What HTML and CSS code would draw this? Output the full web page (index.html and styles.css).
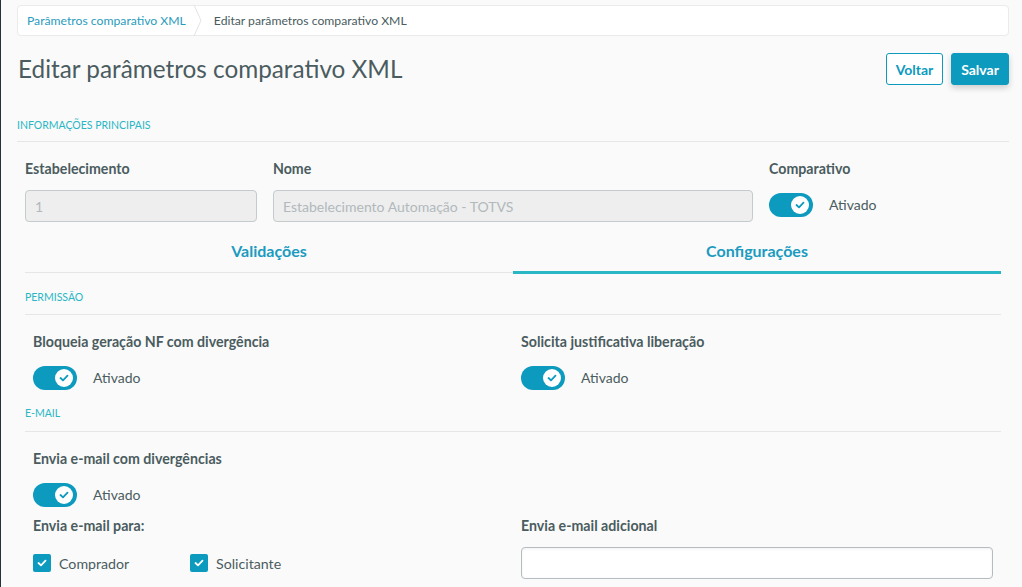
FILE: index.html
```html
<!DOCTYPE html>
<html>
  <head>
    <meta charset="UTF-8" />
    <meta name="viewport" content="width=device-width, initial-scale=1.0" />
    <title>Editar parâmetros comparativo XML</title>
    <link rel="stylesheet" href="styles.css">
  </head>
  <body>
    <div class="page">
      <nav class="breadcrumb">
        <a class="crumb link" href="#">Parâmetros comparativo XML</a>
        <svg class="crumb-sep" width="10" height="31" viewBox="0 0 10 31">
          <polyline points="1,0 8,15.5 1,31" fill="none" stroke="#e3e3e3" stroke-width="1" />
        </svg>
        <span class="crumb">Editar parâmetros comparativo XML</span>
      </nav>

      <header class="page-header">
        <h1 class="page-title">Editar parâmetros comparativo XML</h1>
        <div class="actions">
          <button class="btn btn-outline">Voltar</button>
          <button class="btn btn-primary">Salvar</button>
        </div>
      </header>

      <div class="section-title">Informações principais</div>

      <div class="main-row">
        <div class="field">
          <label class="label">Estabelecimento</label>
          <input class="input" value="1" disabled />
        </div>
        <div class="field">
          <label class="label">Nome</label>
          <input class="input" value="Estabelecimento Automação - TOTVS" disabled />
        </div>
        <div class="field">
          <label class="label">Comparativo</label>
          <div class="switch-row tall">
            <span class="switch"><span class="knob"><svg width="10" height="8" viewBox="0 0 10 8"><polyline points="1.5,4 4,6.3 8.5,1.7" fill="none" stroke="#0c9abe" stroke-width="1.8" stroke-linecap="round" stroke-linejoin="round"/></svg></span></span>
            <span class="switch-text">Ativado</span>
          </div>
        </div>
      </div>

      <div class="tabs-wrap">
        <div class="tabs">
          <div class="tab">Validações</div>
          <div class="tab active">Configurações</div>
        </div>

        <div class="section-title sub">Permissão</div>
        <div class="grid-2">
          <div class="field pad">
            <label class="label">Bloqueia geração NF com divergência</label>
            <div class="switch-row">
              <span class="switch"><span class="knob"><svg width="10" height="8" viewBox="0 0 10 8"><polyline points="1.5,4 4,6.3 8.5,1.7" fill="none" stroke="#0c9abe" stroke-width="1.8" stroke-linecap="round" stroke-linejoin="round"/></svg></span></span>
              <span class="switch-text">Ativado</span>
            </div>
          </div>
          <div class="field pad">
            <label class="label">Solicita justificativa liberação</label>
            <div class="switch-row">
              <span class="switch"><span class="knob"><svg width="10" height="8" viewBox="0 0 10 8"><polyline points="1.5,4 4,6.3 8.5,1.7" fill="none" stroke="#0c9abe" stroke-width="1.8" stroke-linecap="round" stroke-linejoin="round"/></svg></span></span>
              <span class="switch-text">Ativado</span>
            </div>
          </div>
        </div>

        <div class="section-title sub email">E-mail</div>
        <div class="grid-2">
          <div class="field pad">
            <label class="label">Envia e-mail com divergências</label>
            <div class="switch-row">
              <span class="switch"><span class="knob"><svg width="10" height="8" viewBox="0 0 10 8"><polyline points="1.5,4 4,6.3 8.5,1.7" fill="none" stroke="#0c9abe" stroke-width="1.8" stroke-linecap="round" stroke-linejoin="round"/></svg></span></span>
              <span class="switch-text">Ativado</span>
            </div>
          </div>
          <div></div>
          <div class="field pad row-gap">
            <label class="label">Envia e-mail para:</label>
            <div class="checks">
              <span class="check-item">
                <span class="checkbox"><svg width="10" height="8" viewBox="0 0 10 8"><polyline points="1.5,4 4,6.3 8.5,1.7" fill="none" stroke="#fff" stroke-width="1.8" stroke-linecap="round" stroke-linejoin="round"/></svg></span>
                Comprador
              </span>
              <span class="check-item">
                <span class="checkbox"><svg width="10" height="8" viewBox="0 0 10 8"><polyline points="1.5,4 4,6.3 8.5,1.7" fill="none" stroke="#fff" stroke-width="1.8" stroke-linecap="round" stroke-linejoin="round"/></svg></span>
                Solicitante
              </span>
            </div>
          </div>
          <div class="field pad row-gap">
            <label class="label">Envia e-mail adicional</label>
            <input class="input white" />
          </div>
        </div>
      </div>
    </div>
  </body>
</html>
```

FILE: styles.css
```css
body {
  margin: 0;
  background: #fafafa;
  border-left: 1px solid #25323a;
  font-family: Lato, "Open Sans", Arial, sans-serif;
  color: #4a5c60;
  height: 587px;
  overflow: hidden;
  box-sizing: border-box;
}

.page {
  padding: 5px 13px 0 16px;
}

/* breadcrumb */
.breadcrumb {
  display: flex;
  align-items: center;
  height: 29px;
  background: #fff;
  border: 1px solid #ebebeb;
  border-radius: 4px;
  padding: 0 9px;
  font-size: 12.2px;
}
.crumb {
  color: #4a5c60;
}
.crumb.link {
  color: #2a9cbd;
  text-decoration: none;
}
.crumb-sep {
  margin: 0 11px 0 7px;
}

/* header */
.page-header {
  display: flex;
  align-items: center;
  justify-content: space-between;
  margin-top: 17px;
  height: 32px;
}
.page-title {
  margin: -2px 0 0 1px;
  font-size: 24.3px;
  font-weight: 400;
  color: #4a5c60;
}
.actions {
  display: flex;
  gap: 8px;
}
.btn {
  height: 32px;
  padding: 0 8px;
  border-radius: 3px;
  font-family: inherit;
  font-size: 14px;
  font-weight: 700;
}
.btn-outline {
  background: #fff;
  border: 1px solid #0c9abe;
  color: #0c9abe;
  width: 57px;
}
.btn-primary {
  background: #0c9abe;
  border: 1px solid #0c9abe;
  color: #fff;
  width: 58px;
  box-shadow: 0 3px 6px rgba(0, 0, 0, 0.18);
}

/* section titles */
.section-title {
  margin-top: 32px;
  padding-bottom: 8px;
  line-height: 16px;
  font-size: 10.5px;
  text-transform: uppercase;
  color: #29b6c5;
  border-bottom: 1px solid #e6e6e6;
}
.section-title.sub {
  margin-top: 16px;
  padding-bottom: 9px;
}
.section-title.email {
  margin-top: 15px;
  padding-bottom: 10px;
}

/* fields */
.main-row {
  display: grid;
  grid-template-columns: 248px 496px 248px;
  margin-top: 17px;
}
.field {
  padding: 0 8px;
  display: flex;
  flex-direction: column;
}
.label {
  display: block;
  line-height: 20px;
  font-size: 14.2px;
  font-weight: 700;
  margin-bottom: 11px;
}
.input {
  height: 32px;
  box-sizing: border-box;
  border: 1px solid #c4cacd;
  border-radius: 4px;
  background: #eeeeee;
  padding: 0 9px;
  font-family: inherit;
  font-size: 14px;
  color: #b1b9bc;
}
.input.white {
  background: #fff;
  border-color: #b5bcc0;
  box-shadow: inset 0 1px 3px rgba(0, 0, 0, 0.06);
}

/* switch */
.switch-row {
  display: flex;
  align-items: center;
  gap: 16px;
  height: 24px;
}
.switch-row.tall {
  height: 30px;
}
.switch {
  width: 44px;
  height: 24px;
  border-radius: 12px;
  background: #0c9abe;
  display: flex;
  align-items: center;
  justify-content: flex-end;
  padding-right: 4px;
  box-sizing: border-box;
}
.knob {
  width: 18px;
  height: 18px;
  border-radius: 50%;
  background: #fff;
  display: flex;
  align-items: center;
  justify-content: center;
}
.switch-text {
  font-size: 14px;
  color: #4a5c60;
  margin-top: -2px;
}

/* tabs */
.tabs-wrap {
  margin: 8px 8px 0;
}
.tabs {
  display: grid;
  grid-template-columns: 1fr 1fr;
  border-bottom: 1px solid #e6e6e6;
}
.tab {
  text-align: center;
  padding: 11px 0 10px;
  line-height: 20px;
  font-size: 16px;
  font-weight: 700;
  color: #1b9bc0;
  border-bottom: 3px solid transparent;
  margin-bottom: -2px;
}
.tab.active {
  border-bottom-color: #29b6c5;
}

.grid-2 {
  display: grid;
  grid-template-columns: 1fr 1fr;
  margin-top: 17px;
}
.field.pad {
  padding: 0 8px;
}
.field.pad .label {
  margin-bottom: 14px;
}
.field.row-gap {
  margin-top: 9px;
}
.field.row-gap .label {
  margin-bottom: 11px;
}

/* checkboxes */
.checks {
  display: flex;
  align-items: center;
  height: 32px;
}
.check-item {
  display: flex;
  align-items: center;
  gap: 8px;
  width: 157px;
  font-size: 14.2px;
}
.checkbox {
  width: 18px;
  height: 18px;
  border-radius: 2px;
  background: #0c9abe;
  display: flex;
  align-items: center;
  justify-content: center;
}
```
